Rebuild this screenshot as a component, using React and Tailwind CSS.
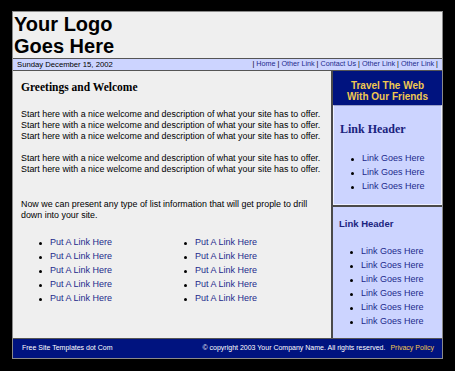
import React from 'react';

const navy = 'text-[#1c2a8c]';

function Dot() {
  return <span className="w-[3px] h-[3px] rounded-full bg-black shrink-0" />;
}

function LinkItem({ children }) {
  return (
    <li className="flex items-center gap-[8px] h-[14px]">
      <Dot />
      <a href="#" className={`${navy} text-[9px]`}>{children}</a>
    </li>
  );
}

export default function App() {
  const para = 'Start here with a nice welcome and description of what your site has to offer.';
  const colLinks = [1, 2, 3, 4, 5];

  return (
    <div className="w-[455px] h-[371px] bg-black pt-[11px] pl-[12px]" style={{ fontFamily: '"Liberation Sans", Arial, sans-serif' }}>
      <div className="w-[431px] border border-[#8a8a8a] bg-[#efefef]">
        {/* logo */}
        <div className="h-[46px] pl-[1px] pt-[1px] text-[20px] font-bold leading-[22px] text-black">
          Your Logo
          <br />
          Goes Here
        </div>

        {/* date + nav bar */}
        <div className="h-[13px] border-t border-b border-[#555] bg-[#ccd4ff] flex items-center justify-between px-[4px] text-black">
          <span className="text-[7.7px]">Sunday December 15, 2002</span>
          <span className="text-[7.2px]">
            | <a href="#" className={navy}>Home</a> | <a href="#" className={navy}>Other Link</a> |{' '}
            <a href="#" className={navy}>Contact Us</a> | <a href="#" className={navy}>Other Link</a> |{' '}
            <a href="#" className={navy}>Other Link</a> |
          </span>
        </div>

        {/* content */}
        <div className="flex h-[267px]">
          <div className="flex-1 pl-[8px] pt-[9px] text-black">
            <h2 className="text-[11.5px] font-bold leading-[14px]" style={{ fontFamily: '"Liberation Serif", "Times New Roman", serif' }}>
              Greetings and Welcome
            </h2>
            <p className="mt-[15px] text-[8.9px] leading-[11px]">
              {para}
              <br />
              {para}
              <br />
              {para}
            </p>
            <p className="mt-[11px] text-[8.9px] leading-[11px]">
              {para}
              <br />
              {para}
            </p>
            <p className="mt-[24px] text-[8.9px] leading-[11px] pr-[4px]">
              Now we can present any type of list information that will get prople to drill down into your site.
            </p>
            <div className="mt-[15px] ml-[18px] grid grid-cols-[145px_145px]">
              <ul>
                {colLinks.map((i) => (
                  <LinkItem key={i}>Put A Link Here</LinkItem>
                ))}
              </ul>
              <ul>
                {colLinks.map((i) => (
                  <LinkItem key={i}>Put A Link Here</LinkItem>
                ))}
              </ul>
            </div>
          </div>

          {/* sidebar */}
          <aside className="w-[111px] border-l-2 border-[#4a4a4a] bg-[#ccd4ff] flex flex-col">
            <div className="h-[34px] bg-[#00137f] pt-[9px] text-center text-[10px] font-bold leading-[11px] text-[#f0c850]">
              Travel The Web
              <br />
              With Our Friends
            </div>
            <div className="border border-[#eef0ff] border-t-[#9aa0c8] h-[100px] pl-[6px] pt-[16px]">
              <h3 className="text-[12px] font-bold leading-[15px] text-[#1a237e]" style={{ fontFamily: '"Liberation Serif", "Times New Roman", serif' }}>
                Link Header
              </h3>
              <ul className="mt-[15px] ml-[11px]">
                <LinkItem>Link Goes Here</LinkItem>
                <LinkItem>Link Goes Here</LinkItem>
                <LinkItem>Link Goes Here</LinkItem>
              </ul>
            </div>
            <div className="flex-1 border-t-2 border-[#4a4a4a] pl-[6px] pt-[11px]">
              <h3 className="text-[9.5px] font-bold leading-[12px] text-[#1a237e]">Link Header</h3>
              <ul className="mt-[15px] ml-[11px]">
                {[1, 2, 3, 4, 5, 6].map((i) => (
                  <LinkItem key={i}>Link Goes Here</LinkItem>
                ))}
              </ul>
            </div>
          </aside>
        </div>

        {/* footer */}
        <div className="h-[20px] bg-[#00137f] border-t border-[#555] flex items-center justify-between pl-[9px] pr-[8px] text-[7px] text-white">
          <span>Free Site Templates dot Com</span>
          <span>
            © copyright 2003 Your Company Name. All rights reserved.{' '}
            <a href="#" className="ml-[3px] text-[#f0c850]">Privacy Policy</a>
          </span>
        </div>
      </div>
    </div>
  );
}
